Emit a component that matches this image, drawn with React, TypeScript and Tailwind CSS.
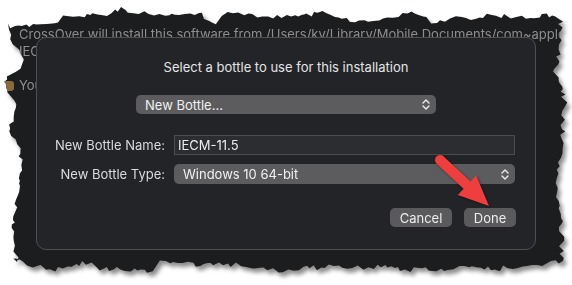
import React from "react";

function rng(seed: number) {
  let s = seed;
  return () => {
    s |= 0;
    s = (s + 0x6d2b79f5) | 0;
    let t = Math.imul(s ^ (s >>> 15), 1 | s);
    t = (t + Math.imul(t ^ (t >>> 7), 61 | t)) ^ t;
    return ((t ^ (t >>> 14)) >>> 0) / 4294967296;
  };
}

function lerpKeys(keys: [number, number][], x: number) {
  if (x <= keys[0][0]) return keys[0][1];
  for (let i = 1; i < keys.length; i++) {
    if (x <= keys[i][0]) {
      const [x0, y0] = keys[i - 1];
      const [x1, y1] = keys[i];
      return y0 + ((y1 - y0) * (x - x0)) / (x1 - x0);
    }
  }
  return keys[keys.length - 1][1];
}

function tornPolygon() {
  const r = rng(7);
  const pts: [number, number][] = [];
  const topKeys: [number, number][] = [
    [8, 26], [55, 25], [65, 16], [110, 15], [120, 8], [130, 13], [200, 14], [215, 24], [228, 11], [240, 15],
    [300, 17], [325, 11], [345, 20], [370, 22], [395, 17], [410, 10], [425, 18], [435, 25], [450, 17],
    [470, 19], [490, 15], [520, 17], [555, 15], [560, 18],
  ];
  for (let x = 8; x < 560; x += 2 + r() * 4) pts.push([x, lerpKeys(topKeys, x) + (r() - 0.5) * 5]);
  const rightKeys: [number, number][] = [
    [18, 560], [40, 562], [70, 555], [100, 565], [140, 562], [180, 557], [220, 560], [262, 563],
  ];
  for (let y = 18; y < 262; y += 2 + r() * 4) pts.push([lerpKeys(rightKeys, y) + (r() - 0.5) * 6, y]);
  const bottomKeys: [number, number][] = [
    [10, 258], [20, 262], [50, 270], [90, 262], [100, 268], [150, 272], [160, 263], [200, 265], [210, 262],
    [280, 270], [350, 266], [420, 270], [500, 268], [563, 262],
  ];
  for (let x = 563; x > 10; x -= 2 + r() * 4) pts.push([x, lerpKeys(bottomKeys, x) + (r() - 0.5) * 6]);
  const leftKeys: [number, number][] = [
    [26, 8], [40, 10], [50, 18], [60, 25], [68, 22], [76, 8], [80, 6], [90, 6], [100, 16], [130, 10], [150, 20],
    [170, 22], [200, 16], [240, 12], [262, 18],
  ];
  for (let y = 262; y > 26; y -= 2 + r() * 4) pts.push([lerpKeys(leftKeys, y) + (r() - 0.5) * 4, y]);
  return `polygon(${pts.map(([x, y]) => `${x.toFixed(1)}px ${y.toFixed(1)}px`).join(",")})`;
}

function Chevrons() {
  return (
    <svg width="8" height="11" viewBox="0 0 8 11" fill="none" stroke="#ededed" strokeWidth="1.4" strokeLinecap="round" strokeLinejoin="round">
      <path d="M1 4 L4 1 L7 4" />
      <path d="M1 7 L4 10 L7 7" />
    </svg>
  );
}

export default function App() {
  const clip = tornPolygon();
  return (
    <div className="relative w-[572px] h-[285px] bg-white overflow-hidden" style={{ fontFamily: "Inter, 'Noto Sans', sans-serif" }}>
      <div className="w-full h-full [filter:drop-shadow(3px_4px_2px_rgba(0,0,0,0.45))]">
        <div className="relative w-full h-full bg-[#1c1d1f]" style={{ clipPath: clip }}>
          <div className="pt-[26px] pl-[19px] text-[13px] leading-[17px] text-[#8e8e90] whitespace-nowrap">
            <div>CrossOver will install this software from /Users/ky/Library/Mobile Documents/com~apple~CloudDocs/</div>
            <div>IECM-11.5</div>
            <div className="h-[17px]" />
            <div className="flex items-center">
              <span className="-ml-[17px] mr-[5px] w-[12px] h-[10px] rounded-[3px] bg-[#8a6a3c]" />
              <span>You can install other software later.</span>
            </div>
          </div>

          <div className="absolute left-[36px] top-[37px] w-[500px] h-[213px] rounded-[10px] border border-[#505053] bg-[#232428] flex flex-col pt-[21px] text-[13px] leading-[16px]">
            <div className="text-center text-[#e4e4e6]">Select a bottle to use for this installation</div>
            <div className="mt-[20px] mx-auto w-[300px] h-[19px] rounded-[5px] bg-[#5c5c5f] flex items-center justify-between pl-[9px] pr-[6px] text-[#f0f0f0]">
              <span>New Bottle...</span>
              <Chevrons />
            </div>
            <div className="mt-[21px] grid grid-cols-[128px_1fr] gap-x-[9px] gap-y-[9px] pr-[20px] items-center text-[#dadadc]">
              <div className="text-right">New Bottle Name:</div>
              <div className="h-[20px] border border-[#4a4b4e] bg-[#2c2d30] flex items-center pl-[3px] text-[#ececec]">IECM-11.5</div>
              <div className="text-right">New Bottle Type:</div>
              <div className="h-[20px] rounded-[5px] bg-[#5c5c5f] flex items-center justify-between pl-[9px] pr-[6px] text-[#f0f0f0]">
                <span>Windows 10 64-bit</span>
                <Chevrons />
              </div>
            </div>
            <div className="mt-[24px] flex justify-end gap-[12px] pr-[19px]">
              <div className="w-[62px] h-[19px] rounded-[5px] bg-[#5a5a5d] flex items-center justify-center text-[#ececec]">Cancel</div>
              <div className="w-[52px] h-[19px] rounded-[5px] bg-[#5a5a5d] flex items-center justify-center text-[#ececec]">Done</div>
            </div>
          </div>

          <svg className="absolute left-0 top-0" width="572" height="285" viewBox="0 0 572 285">
            <g style={{ filter: "drop-shadow(1px 1px 1px rgba(0,0,0,0.5))" }}>
              <line x1="440" y1="160" x2="468" y2="186" stroke="#ee3e3d" strokeWidth="10" strokeLinecap="round" />
              <polygon points="457.8,195 476.2,175.4 489,206" fill="#ee3e3d" />
            </g>
          </svg>
        </div>
      </div>
    </div>
  );
}
